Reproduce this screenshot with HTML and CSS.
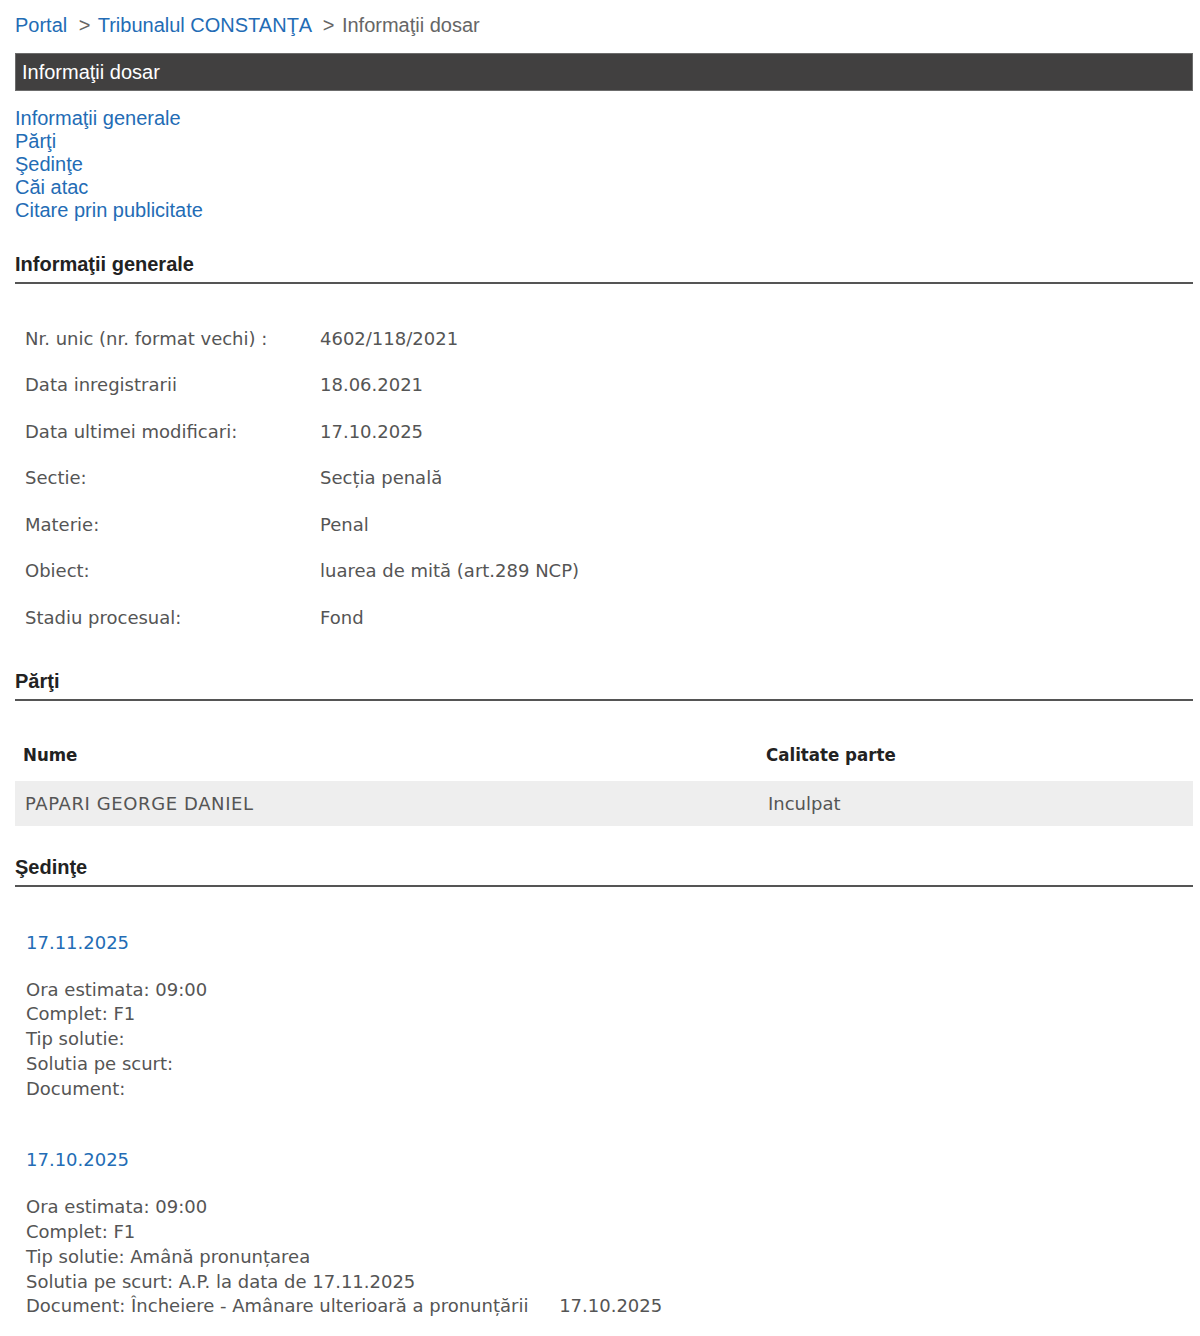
FILE: index.html
```html
<!DOCTYPE html>
<html lang="ro">
<head>
    <meta charset="UTF-8" />
    <title>Informaţii dosar</title>
    <link rel="stylesheet" href="styles.css">
</head>
<body>
<div class="page">
    <div class="breadcrumb">
        <a href="#">Portal</a>
        <span class="sep">&gt;</span>
        <a href="#">Tribunalul CONSTANŢA</a>
        <span class="sep">&gt;</span>
        <span class="current">Informaţii dosar</span>
    </div>

    <div class="title-bar">Informaţii dosar</div>

    <div class="toc">
        <a href="#general">Informaţii generale</a>
        <a href="#parti">Părţi</a>
        <a href="#sedinte">Şedinţe</a>
        <a href="#atac">Căi atac</a>
        <a href="#citare">Citare prin publicitate</a>
    </div>

    <h2 class="section-title" id="general">Informaţii generale</h2>
    <table class="info-table">
        <tr><td class="label">Nr. unic (nr. format vechi) :</td><td>4602/118/2021</td></tr>
        <tr><td class="label">Data inregistrarii</td><td>18.06.2021</td></tr>
        <tr><td class="label">Data ultimei modificari:</td><td>17.10.2025</td></tr>
        <tr><td class="label">Sectie:</td><td>Secția penală</td></tr>
        <tr><td class="label">Materie:</td><td>Penal</td></tr>
        <tr><td class="label">Obiect:</td><td>luarea de mită (art.289 NCP)</td></tr>
        <tr><td class="label">Stadiu procesual:</td><td>Fond</td></tr>
    </table>

    <h2 class="section-title" id="parti">Părţi</h2>
    <table class="parti-table">
        <thead>
            <tr><th class="col-name">Nume</th><th>Calitate parte</th></tr>
        </thead>
        <tbody>
            <tr class="alt"><td class="name">PAPARI GEORGE DANIEL</td><td>Inculpat</td></tr>
        </tbody>
    </table>

    <h2 class="section-title" id="sedinte">Şedinţe</h2>
    <div class="sedinta">
        <div class="sedinta-date">17.11.2025</div>
        <div class="sedinta-body">
            Ora estimata: 09:00<br>
            Complet: F1<br>
            Tip solutie:<br>
            Solutia pe scurt:<br>
            Document:
        </div>
    </div>
    <div class="sedinta">
        <div class="sedinta-date">17.10.2025</div>
        <div class="sedinta-body">
            Ora estimata: 09:00<br>
            Complet: F1<br>
            Tip solutie: Amână pronunțarea<br>
            Solutia pe scurt: A.P. la data de 17.11.2025<br>
            Document: Încheiere - Amânare ulterioară a pronunțării <span class="doc-date">17.10.2025</span>
        </div>
    </div>
</div>
</body>
</html>
```

FILE: styles.css
```css
html, body {
    margin: 0;
    padding: 0;
}

body {
    background: #fff;
    font-family: "Liberation Sans", Arial, sans-serif;
    color: #333;
}

a {
    color: #236cb5;
    text-decoration: none;
}

.page {
    padding: 12px 7px 0 15px;
}

.breadcrumb {
    font-size: 20px;
    line-height: 26px;
    color: #666;
}

.breadcrumb .sep {
    margin: 0 2px 0 6px;
}

.title-bar {
    margin-top: 15px;
    background: #414040;
    border: 1px solid #6c6c6c;
    color: #fff;
    font-size: 20px;
    line-height: 36px;
    padding: 0 6px;
}

.toc {
    display: flex;
    flex-direction: column;
    margin-top: 16px;
    font-size: 20px;
    line-height: 23px;
}

.section-title {
    margin: 0;
    font-size: 20px;
    font-weight: bold;
    color: #222;
    line-height: 24px;
    padding-bottom: 6px;
    border-bottom: 2px solid #555;
}

#general {
    margin-top: 30px;
}

/* label / value rows */
.info-table {
    border-collapse: collapse;
    margin: 31px 0 28px 0;
    font-family: "DejaVu Sans", Verdana, sans-serif;
    font-size: 18px;
    color: #555;
}

.info-table td {
    height: 46.5px;
    padding: 0 0 0 10px;
}

.info-table td.label {
    width: 285px;
}

.parti-table {
    width: 100%;
    border-collapse: collapse;
    margin: 32px 0 29px 0;
    font-family: "DejaVu Sans", Verdana, sans-serif;
    font-size: 18px;
    color: #555;
}

.parti-table th {
    text-align: left;
    font-family: "DejaVu Sans Condensed", "DejaVu Sans", sans-serif;
    font-size: 18.5px;
    color: #222;
    height: 44px;
    padding: 0 8px 4px 8px;
}

.parti-table th.col-name {
    width: 727px;
}

.parti-table td {
    height: 45px;
    padding: 0 10px;
}

.parti-table td.name {
    letter-spacing: 0.6px;
}

.parti-table tr.alt {
    background: #eeeeee;
}

/* hearings list */
.sedinta {
    padding: 44px 0 17px 11px;
    font-family: "DejaVu Sans", Verdana, sans-serif;
    font-size: 18px;
    color: #555;
}

.sedinta + .sedinta {
    padding-top: 30px;
}

.sedinta-date {
    color: #236cb5;
    line-height: 24px;
    margin-bottom: 23px;
}

.sedinta-body {
    line-height: 24.75px;
}

.doc-date {
    margin-left: 25px;
}
```
